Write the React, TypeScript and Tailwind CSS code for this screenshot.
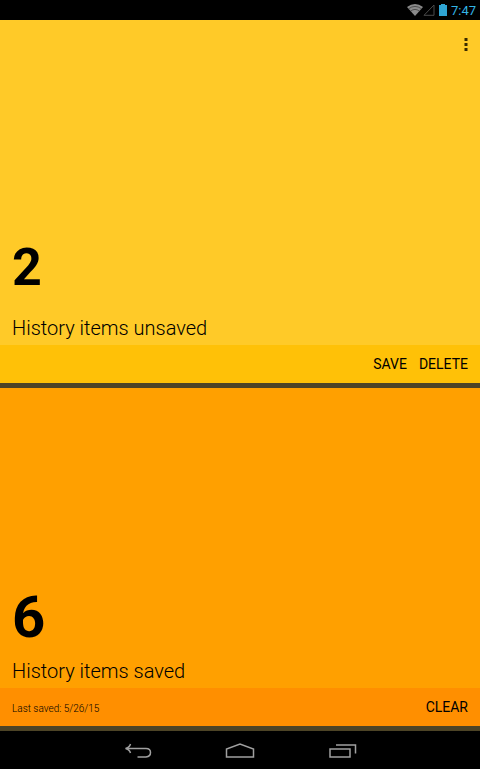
import React from "react";

interface HistoryCardProps {
  count: number;
  countClass: string;
  label: string;
  bodyClass: string;
  footerClass: string;
  note?: string;
  actions: string[];
  children?: React.ReactNode;
}

function StatusBar() {
  return (
    <header className="flex h-5 shrink-0 items-center justify-end bg-black pr-1 text-[#33b5e5]">
      <svg className="h-3 w-4" viewBox="0 0 16 12" aria-label="Wi-Fi">
        <path d="M8 12L0 3Q8 -3 16 3Z" fill="#8a8a8a" />
        <path
          d="M1.5 4.8Q8 0 14.5 4.8M3.5 7.2Q8 3.6 12.5 7.2"
          fill="none"
          stroke="#333"
          strokeWidth="0.7"
        />
      </svg>
      <svg className="h-3 w-3" viewBox="0 0 12 12" aria-label="No signal">
        <path d="M1 11.3L11 1V11.3Z" fill="none" stroke="#4a4a4a" />
      </svg>
      <svg className="ml-1 h-3 w-2" viewBox="0 0 8 12" aria-label="Battery">
        <path d="M2 0H6V1H8V12H0V1H2Z" fill="#2fa5d3" />
      </svg>
      <span className="ml-1 pt-px text-[13px] leading-5">7:47</span>
    </header>
  );
}

function HistoryCard({
  count,
  countClass,
  label,
  bodyClass,
  footerClass,
  note,
  actions,
  children,
}: HistoryCardProps) {
  return (
    <>
      <div className={`flex flex-1 flex-col justify-between px-3 pb-[5px] ${bodyClass}`}>
        <div className="flex h-12 items-center justify-end">{children}</div>
        <div>
          <p className={`font-bold ${countClass}`}>{count}</p>
          <h2 className="text-xl leading-6 font-light">{label}</h2>
        </div>
      </div>
      <div
        className={`flex h-[38px] shrink-0 items-center justify-between px-3 ${footerClass}`}
      >
        <span className="pt-[3px] text-[10px] font-light">{note}</span>
        <div className="flex gap-3">
          {actions.map((action) => (
            <button key={action} type="button" className="text-sm uppercase">
              {action}
            </button>
          ))}
        </div>
      </div>
    </>
  );
}

function NavBar() {
  return (
    <nav className="flex h-[38px] shrink-0 items-center justify-center gap-[72px] bg-black text-[#a0a0a0]">
      <button type="button" aria-label="Back">
        <svg
          className="h-5 w-8"
          viewBox="0 0 32 20"
          fill="none"
          stroke="currentColor"
          strokeWidth="1.5"
        >
          <path d="M6 8.5H26Q30.5 8.5 30.5 12.5T26 17H17.5" />
          <path d="M10.5 4Q9.5 7.5 5.5 8.5Q9.5 9.5 10.5 13" />
        </svg>
      </button>
      <button type="button" aria-label="Home">
        <svg
          className="h-5 w-8"
          viewBox="0 0 32 20"
          fill="none"
          stroke="currentColor"
          strokeWidth="1.5"
        >
          <path d="M2.5 17V9L16 4L29.5 9V17Z" />
        </svg>
      </button>
      <button type="button" aria-label="Recent apps">
        <svg
          className="h-5 w-8"
          viewBox="0 0 32 20"
          fill="none"
          stroke="currentColor"
          strokeWidth="1.5"
        >
          <path d="M2 9H22V17H2ZM8 5H27.5V13.5" />
        </svg>
      </button>
    </nav>
  );
}

export default function App() {
  return (
    <div className="flex min-h-screen w-full flex-col bg-[#4d4426] font-[Roboto,sans-serif] text-black">
      <StatusBar />
      <main className="flex flex-1 flex-col gap-[5px] pb-[5px]">
        <section className="flex flex-[14_1_0px] flex-col">
          <HistoryCard
            count={2}
            countClass="mb-[18px] text-[52px] leading-[60px]"
            label="History items unsaved"
            bodyClass="bg-[#ffca28]"
            footerClass="bg-[#ffc107]"
            actions={["Save", "Delete"]}
          >
            <button type="button" aria-label="More options">
              <svg className="h-4 w-1" viewBox="0 0 4 16" fill="#3a2a00">
                <path d="M0.5 2H3.5V5H0.5ZM0.5 7H3.5V10H0.5ZM0.5 12H3.5V15H0.5Z" />
              </svg>
            </button>
          </HistoryCard>
        </section>
        <section className="flex flex-[13_1_0px] flex-col">
          <HistoryCard
            count={6}
            countClass="mb-3 text-[58px] leading-[60px]"
            label="History items saved"
            bodyClass="bg-[#ffa000]"
            footerClass="bg-[#ff8f00]"
            note="Last saved: 5/26/15"
            actions={["Clear"]}
          />
        </section>
      </main>
      <NavBar />
    </div>
  );
}
